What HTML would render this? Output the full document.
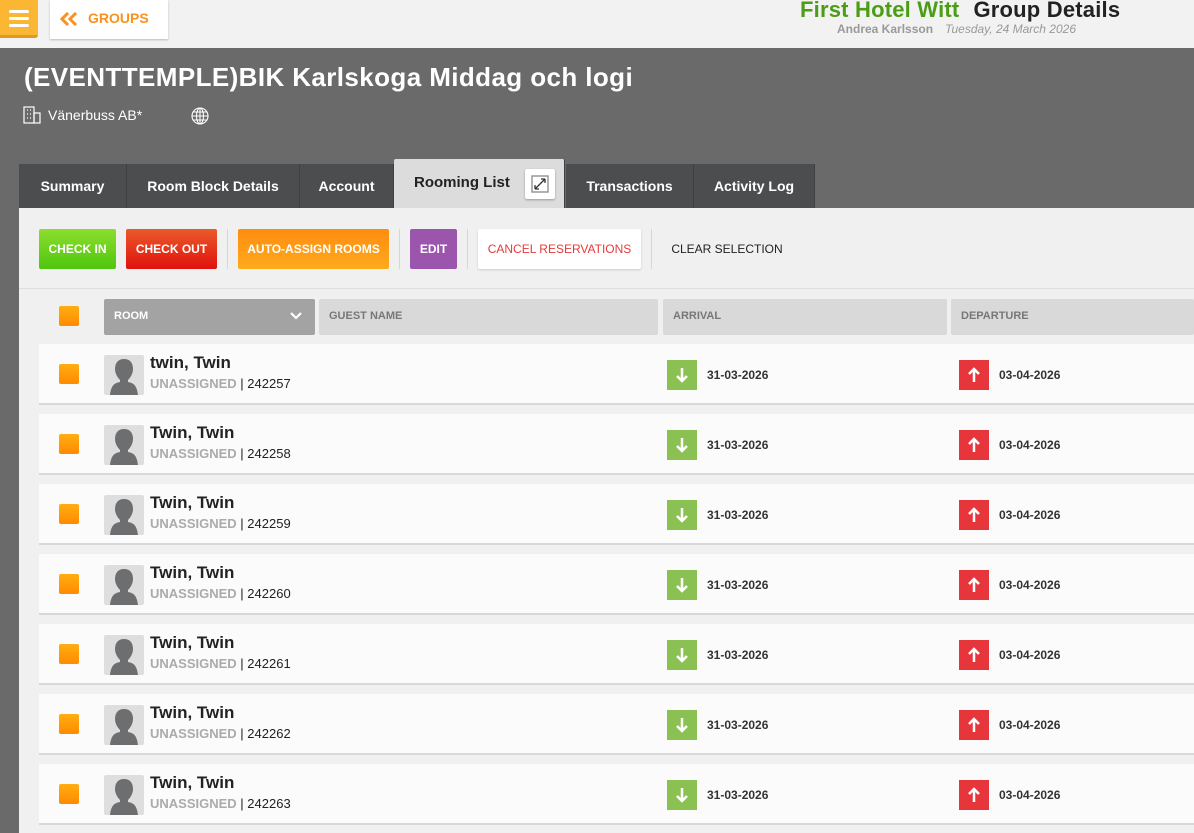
<!DOCTYPE html>
<html><head><meta charset="utf-8"><style>
*{box-sizing:border-box;margin:0;padding:0}
body{width:1194px;height:833px;overflow:hidden;background:#6a6a6b;font-family:"Liberation Sans",sans-serif;position:relative}
.abs{position:absolute}
.top{left:0;top:0;width:1194px;height:48px;background:#f2f2f2}
.menu{left:0;top:0;width:38px;height:38px;background:#fbb634;border-bottom:3px solid #e09a20;border-radius:0 0 3px 0}
.menu i{position:absolute;left:9px;width:20px;height:3px;background:#fff;border-radius:2px}
.groups{left:50px;top:0;width:118px;height:39px;background:#fff;box-shadow:0 1px 2px #bbb;color:#f7931e;font-weight:bold;font-size:14px;line-height:37px;padding-left:38px}
.hotel{left:800px;top:-3px;font-size:22px;font-weight:bold;color:#4c9d16;white-space:nowrap;letter-spacing:0.2px}
.hotel b{color:#222;margin-left:14px}
.sub{left:837px;top:22px;font-size:12px;color:#999;white-space:nowrap}
.sub b{margin-right:12px}
.title{left:24px;top:62px;color:#fff;font-size:26px;font-weight:bold;letter-spacing:0.4px}
.co{left:48px;top:107px;color:#fff;font-size:14px}
.tab{top:164px;height:44px;background:#4c4d4f;color:#fff;font-size:14px;font-weight:bold;text-align:center;line-height:44px;border-right:1px solid #3f4042}
.panel{left:19px;top:208px;width:1175px;height:625px;background:#f0f0f0}
.btn{top:229px;height:40px;line-height:40px;color:#fff;font-size:12px;font-weight:bold;text-align:center;border-radius:2px}
.sep{top:229px;width:1px;height:40px;background:#d6d6d6}
.cb{width:20px;height:20px;background:linear-gradient(#ffae10,#ff8a00);border-radius:2px}
.hd{top:299px;height:36px;line-height:34px;font-size:11px;font-weight:bold;color:#777;padding-left:10px;background:#d9d9d9;border-radius:2px}
.row{left:39px;width:1155px;height:61px;background:#fbfbfb;border-bottom:2px solid #d8d8d8}
.av{left:65px;top:11px;width:40px;height:40px;background:#dedede;border-radius:2px;overflow:hidden}
.nm{left:111px;top:9px;font-size:17px;font-weight:bold;color:#222}
.un{left:111px;top:32px;font-size:13px;color:#222}
.un b{color:#aaa}
.ic{top:16px;width:30px;height:30px}
.dt{top:24px;font-size:12px;font-weight:bold;color:#333}
</style></head><body>
<div class="abs top"></div>
<div class="abs menu"><i style="top:10px"></i><i style="top:17px"></i><i style="top:24px"></i></div>
<div class="abs groups"><svg class="abs" style="left:10px;top:12px" width="18" height="14" viewBox="0 0 18 14"><path d="M8 1L2 7l6 6M16 1l-6 6 6 6" stroke="#f7931e" stroke-width="3" fill="none"/></svg>GROUPS</div>
<div class="abs hotel">First Hotel Witt<b>Group Details</b></div>
<div class="abs sub"><b>Andrea Karlsson</b><i>Tuesday, 24 March 2026</i></div>
<div class="abs title">(EVENTTEMPLE)BIK Karlskoga Middag och logi</div>
<svg class="abs" style="left:23px;top:106px" width="18" height="18" viewBox="0 0 18 18" fill="none" stroke="#fff" stroke-width="1.2"><rect x="1" y="1" width="10" height="16"/><rect x="11" y="7" width="6" height="10"/><path d="M4 4h1M7 4h1M4 8h1M7 8h1M4 12h1M7 12h1"/></svg>
<div class="abs co">Vänerbuss AB*</div>
<svg class="abs" style="left:191px;top:107px" width="18" height="18" viewBox="0 0 18 18" fill="none" stroke="#fff" stroke-width="1.1"><circle cx="9" cy="9" r="8"/><ellipse cx="9" cy="9" rx="3.5" ry="8"/><path d="M1 9h16M2.5 5h13M2.5 13h13M9 1v16"/></svg>
<div class="abs tab" style="left:19px;width:108px">Summary</div>
<div class="abs tab" style="left:127px;width:173px">Room Block Details</div>
<div class="abs tab" style="left:300px;width:94px">Account</div>
<div class="abs tab" style="left:394px;top:159px;height:49px;width:171px;background:#dcdcdc;color:#222;font-size:15px;text-align:left;padding-left:20px;line-height:48px;border-radius:2px 2px 0 0">Rooming List</div>
<div class="abs" style="left:525px;top:169px;width:30px;height:30px;background:#fff;border-radius:2px;box-shadow:0 1px 2px #999"><svg width="30" height="30" viewBox="0 0 30 30" fill="none" stroke="#333" stroke-width="1.3"><rect x="7" y="7" width="16" height="16" stroke="#888"/><path d="M10 20l10-10M10 20v-4M10 20h4M20 10h-4M20 10v4"/></svg></div>
<div class="abs tab" style="left:566px;width:128px">Transactions</div>
<div class="abs tab" style="left:694px;width:121px">Activity Log</div>
<div class="abs panel"></div>
<div class="abs btn" style="left:39px;width:77px;background:linear-gradient(#8ddd2e,#4fc60f)">CHECK IN</div>
<div class="abs btn" style="left:126px;width:91px;background:linear-gradient(#ea5a2a,#e0110c)">CHECK OUT</div>
<div class="abs sep" style="left:227px"></div>
<div class="abs btn" style="left:238px;width:151px;background:linear-gradient(#ff8c10,#ffaa1c)">AUTO-ASSIGN ROOMS</div>
<div class="abs sep" style="left:399px"></div>
<div class="abs btn" style="left:410px;width:47px;background:#9b55ad">EDIT</div>
<div class="abs sep" style="left:467px"></div>
<div class="abs btn" style="left:478px;width:163px;background:#fff;color:#e53a3a;font-weight:normal;box-shadow:0 1px 2px #ccc">CANCEL RESERVATIONS</div>
<div class="abs sep" style="left:651px"></div>
<div class="abs btn" style="left:662px;width:130px;color:#222;font-weight:normal">CLEAR SELECTION</div>
<div class="abs" style="left:19px;top:288px;width:1175px;height:1px;background:#ddd"></div>
<div class="abs cb" style="left:59px;top:306px"></div>
<div class="abs hd" style="left:104px;width:211px;background:#a3a3a3;color:#fff">ROOM<svg class="abs" style="left:186px;top:13px" width="12" height="8" viewBox="0 0 12 8"><path d="M1 1l5 5 5-5" stroke="#fff" stroke-width="2.2" fill="none"/></svg></div>
<div class="abs hd" style="left:319px;width:339px">GUEST NAME</div>
<div class="abs hd" style="left:663px;width:284px">ARRIVAL</div>
<div class="abs hd" style="left:951px;width:243px">DEPARTURE</div>
<div id="rows"></div>
<script>
var h='',names=['twin, Twin','Twin, Twin','Twin, Twin','Twin, Twin','Twin, Twin','Twin, Twin','Twin, Twin'];
for(var i=0;i<7;i++){var y=344+70*i;
h+='<div class="abs row" style="top:'+y+'px"><div class="abs cb" style="left:20px;top:20px"></div>'+
'<div class="abs av"><svg width="40" height="40" viewBox="0 0 40 40"><path d="M20 4c-6 0-9 4-9 10 0 5 3 9 5 11v2c-6 1-9 4-10 13h28c-1-9-4-12-10-13v-2c2-2 5-6 5-11 0-6-3-10-9-10z" fill="#6d6e70"/></svg></div>'+
'<div class="abs nm">'+names[i]+'</div><div class="abs un"><b>UNASSIGNED</b> | '+(242257+i)+'</div>'+
'<div class="abs ic" style="left:628px;background:#8bc152"><svg width="30" height="30" viewBox="0 0 30 30"><path d="M15 8v13M10 16l5 5 5-5" stroke="#fff" stroke-width="2.5" fill="none"/></svg></div>'+
'<div class="abs dt" style="left:668px">31-03-2026</div>'+
'<div class="abs ic" style="left:920px;background:#e6363b"><svg width="30" height="30" viewBox="0 0 30 30"><path d="M15 22V9M10 14l5-5 5 5" stroke="#fff" stroke-width="2.5" fill="none"/></svg></div>'+
'<div class="abs dt" style="left:960px">03-04-2026</div></div>';}
document.getElementById('rows').innerHTML=h;
</script>
</body></html>
